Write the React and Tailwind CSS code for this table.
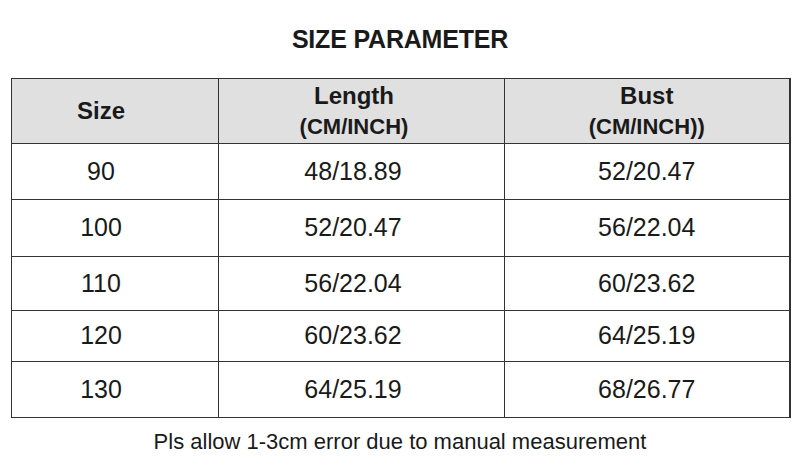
import React from 'react';

const rows = [
  ['90', '48/18.89', '52/20.47', 'h-[56px]'],
  ['100', '52/20.47', '56/22.04', 'h-[57px]'],
  ['110', '56/22.04', '60/23.62', 'h-[54px]'],
  ['120', '60/23.62', '64/25.19', 'h-[51px]'],
  ['130', '64/25.19', '68/26.77', 'h-[56px]'],
];

export default function App() {
  return (
    <div className="w-[800px] h-[466px] bg-white text-[#1a1a1a] font-['Liberation_Sans',Arial,sans-serif] overflow-hidden">
      <h1 className="pt-[24px] text-center text-[25px] leading-[30px] font-bold tracking-[-0.2px]">
        SIZE PARAMETER
      </h1>
      <table className="mt-[24px] ml-[11px] w-[778px] border-collapse table-fixed">
        <colgroup>
          <col className="w-[207px]" />
          <col className="w-[286px]" />
          <col className="w-[285px]" />
        </colgroup>
        <thead>
          <tr className="h-[65px] bg-[#e0e0e0]">
            <th className="border border-[#333] pr-[28px] text-[24px] font-bold">Size</th>
            <th className="border border-[#333] pr-[15px] text-[22px] leading-[31px] font-bold">
              <div className="text-[24px]">Length</div>
              <div>(CM/INCH)</div>
            </th>
            <th className="border border-[#333] border-r-2 text-[22px] leading-[31px] font-bold">
              <div className="text-[24px]">Bust</div>
              <div>(CM/INCH))</div>
            </th>
          </tr>
        </thead>
        <tbody>
          {rows.map(([size, len, bust, h]) => (
            <tr key={size} className={h}>
              <td className="border border-[#333] pr-[28px] text-center text-[25px]">{size}</td>
              <td className="border border-[#333] pr-[17px] text-center text-[25px]">{len}</td>
              <td className="border border-[#333] border-r-2 text-center text-[25px]">{bust}</td>
            </tr>
          ))}
        </tbody>
      </table>
      <p className="mt-[11px] text-center text-[22px] leading-[26px]">
        Pls allow 1-3cm error due to manual measurement
      </p>
    </div>
  );
}
